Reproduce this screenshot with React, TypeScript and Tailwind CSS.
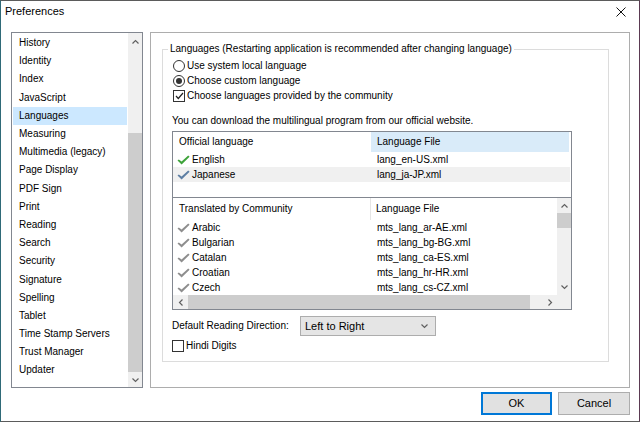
import React from 'react';

const sections = [
  'History',
  'Identity',
  'Index',
  'JavaScript',
  'Languages',
  'Measuring',
  'Multimedia (legacy)',
  'Page Display',
  'PDF Sign',
  'Print',
  'Reading',
  'Search',
  'Security',
  'Signature',
  'Spelling',
  'Tablet',
  'Time Stamp Servers',
  'Trust Manager',
  'Updater',
];

const official = [
  { name: 'English', file: 'lang_en-US.xml', color: '#3ea33a', active: false },
  { name: 'Japanese', file: 'lang_ja-JP.xml', color: '#5d7ea3', active: true },
];

const community = [
  { name: 'Arabic', file: 'mts_lang_ar-AE.xml' },
  { name: 'Bulgarian', file: 'mts_lang_bg-BG.xml' },
  { name: 'Catalan', file: 'mts_lang_ca-ES.xml' },
  { name: 'Croatian', file: 'mts_lang_hr-HR.xml' },
  { name: 'Czech', file: 'mts_lang_cs-CZ.xml' },
];

type Dir = 'up' | 'down' | 'left' | 'right';

const Arrow = ({ dir }: { dir: Dir }) => {
  const pts: Record<Dir, string> = {
    up: '0.5,4.5 3.5,1.5 6.5,4.5',
    down: '0.5,1.5 3.5,4.5 6.5,1.5',
    left: '4.5,0.5 1.5,3.5 4.5,6.5',
    right: '1.5,0.5 4.5,3.5 1.5,6.5',
  };
  const vertical = dir === 'up' || dir === 'down';
  return (
    <svg
      width={vertical ? 7 : 6}
      height={vertical ? 6 : 7}
      viewBox={vertical ? '0 0 7 6' : '0 0 6 7'}
      className="block"
    >
      <polyline points={pts[dir]} fill="none" stroke="#606060" strokeWidth="1.2" />
    </svg>
  );
};

const Tick = ({ color }: { color: string }) => (
  <svg width="13" height="10" viewBox="0 0 13 10" className="block shrink-0">
    <path d="M0.5 5.6 L1.8 4.4 L4.6 6.6 L11.2 0.4 L12.6 1.8 L4.6 9.4 Z" fill={color} />
  </svg>
);

const Radio = ({ checked }: { checked?: boolean }) => (
  <span className="w-[12px] h-[12px] rounded-full border border-[#333333] bg-white flex items-center justify-center shrink-0">
    {checked && <span className="w-[6px] h-[6px] rounded-full bg-[#333333]" />}
  </span>
);

const Check = ({ checked }: { checked?: boolean }) => (
  <span className="w-[12px] h-[12px] border border-[#333333] bg-white flex items-center justify-center shrink-0">
    {checked && (
      <svg width="9" height="8" viewBox="0 0 9 8" className="block">
        <polyline points="1,4 3.3,6.5 8,1" fill="none" stroke="#222222" strokeWidth="1.2" />
      </svg>
    )}
  </span>
);

export default function App() {
  return (
    <div className="w-[640px] h-[422px] bg-white border border-[#5b5b5b] border-l-[#2f6a78] border-r-[#5b3a52] flex flex-col font-['Liberation_Sans',Arial,sans-serif] text-[10px] text-black leading-none overflow-hidden">
      {/* title bar */}
      <div className="h-[21px] flex items-center justify-between pl-[4px] pr-[13px]">
        <span className="text-[11px]">Preferences</span>
        <svg width="10" height="10" viewBox="0 0 10 10" className="block">
          <path d="M0.5 0.5 L9.5 9.5 M9.5 0.5 L0.5 9.5" stroke="#111111" strokeWidth="1" />
        </svg>
      </div>

      <div className="mt-[10px] h-[356px] flex pl-[10px] gap-[7px]">
        {/* sections list */}
        <div className="w-[132px] border border-[#828790] flex">
          <div className="flex-1 pt-[1px]">
            {sections.map((s) => (
              <div
                key={s}
                className={`h-[18.2px] mx-[1px] pl-[6px] flex items-center ${
                  s === 'Languages' ? 'bg-[#cce8ff]' : ''
                }`}
              >
                {s}
              </div>
            ))}
          </div>
          <div className="w-[14px] bg-[#f0f0f0] flex flex-col">
            <div className="h-[17px] flex items-center justify-center">
              <Arrow dir="up" />
            </div>
            <div className="h-[83px]" />
            <div className="h-[239px] bg-[#cdcdcd]" />
            <div className="flex-1 flex items-center justify-center">
              <Arrow dir="down" />
            </div>
          </div>
        </div>

        {/* languages page */}
        <div className="w-[480px] border border-[#adadad] pl-[11px] pt-[16px] pr-[20px]">
          <div className="relative h-[313px] border border-[#dcdcdc] pl-[9px] pt-[8px]">
            <span className="absolute left-[5px] -top-[8px] bg-white px-[2px] h-[14px] flex items-center">
              Languages (Restarting application is recommended after changing language)
            </span>

            <div className="h-[15px] flex items-center gap-[2px] ml-[1px]">
              <Radio />
              <span>Use system local language</span>
            </div>
            <div className="h-[15px] flex items-center gap-[2px] ml-[1px]">
              <Radio checked />
              <span>Choose custom language</span>
            </div>
            <div className="h-[15px] flex items-center gap-[2px] ml-[1px]">
              <Check checked />
              <span>Choose languages provided by the community</span>
            </div>

            <div className="mt-[10px] h-[15px] flex items-center">
              You can download the multilingual program from our official website.
            </div>

            {/* official languages */}
            <div className="mt-[3px] w-[400px] h-[66px] border border-b-0 border-[#828790] pr-[1px]">
              <div className="h-[20px] flex">
                <div className="w-[198px] pl-[6px] flex items-center">Official language</div>
                <div className="w-[198px] pl-[6px] flex items-center bg-[#d9ebf9]">Language File</div>
              </div>
              {official.map((l) => (
                <div key={l.name} className={`h-[15px] flex ${l.active ? 'bg-[#f0f0f0]' : ''}`}>
                  <div className="w-[198px] pl-[4px] flex items-center gap-[2px]">
                    <Tick color={l.color} />
                    <span>{l.name}</span>
                  </div>
                  <div className="w-[198px] pl-[6px] flex items-center">{l.file}</div>
                </div>
              ))}
            </div>

            {/* community languages */}
            <div className="w-[400px] h-[113px] border border-[#828790] flex flex-col">
              <div className="h-[97px] flex">
                <div className="w-[384px]">
                  <div className="h-[22px] flex">
                    <div className="w-[198px] pl-[6px] flex items-center border-r border-[#e5e5e5]">
                      Translated by Community
                    </div>
                    <div className="flex-1 pl-[5px] flex items-center">Language File</div>
                  </div>
                  {community.map((l) => (
                    <div key={l.name} className="h-[15px] flex">
                      <div className="w-[198px] pl-[4px] flex items-center gap-[2px]">
                        <Tick color="#8e8e8e" />
                        <span>{l.name}</span>
                      </div>
                      <div className="flex-1 pl-[6px] flex items-center">{l.file}</div>
                    </div>
                  ))}
                </div>
                <div className="flex-1 bg-[#f0f0f0] flex flex-col">
                  <div className="h-[15px] flex items-center justify-center">
                    <Arrow dir="up" />
                  </div>
                  <div className="h-[15px] bg-[#cdcdcd]" />
                  <div className="flex-1 flex items-end justify-center pb-[5px]">
                    <Arrow dir="down" />
                  </div>
                </div>
              </div>
              <div className="flex-1 flex bg-[#f0f0f0]">
                <div className="w-[15px] flex items-center justify-center">
                  <Arrow dir="left" />
                </div>
                <div className="w-[342px] bg-[#cdcdcd]" />
                <div className="w-[12px]" />
                <div className="w-[15px] flex items-center justify-center">
                  <Arrow dir="right" />
                </div>
              </div>
            </div>

            {/* reading direction */}
            <div className="mt-[6px] h-[20px] flex items-center">
              <span className="w-[128px]">Default Reading Direction:</span>
              <div className="w-[136px] h-[20px] bg-[#e5e5e5] border border-[#adadad] flex items-center justify-between pl-[4px] pr-[7px]">
                <span className="text-[11px]">Left to Right</span>
                <Arrow dir="down" />
              </div>
            </div>
            <div className="mt-[3px] h-[14px] flex items-center gap-[2px]">
              <Check />
              <span>Hindi Digits</span>
            </div>
          </div>
        </div>
      </div>

      {/* buttons */}
      <div className="mt-[4px] h-[23px] flex justify-end gap-[6px] pr-[9px]">
        <button className="w-[71px] h-[23px] bg-[#e1e1e1] border-2 border-[#0078d7] text-[11px] flex items-center justify-center">
          OK
        </button>
        <button className="w-[72px] h-[23px] bg-[#e1e1e1] border border-[#adadad] text-[11px] flex items-center justify-center">
          Cancel
        </button>
      </div>
    </div>
  );
}
